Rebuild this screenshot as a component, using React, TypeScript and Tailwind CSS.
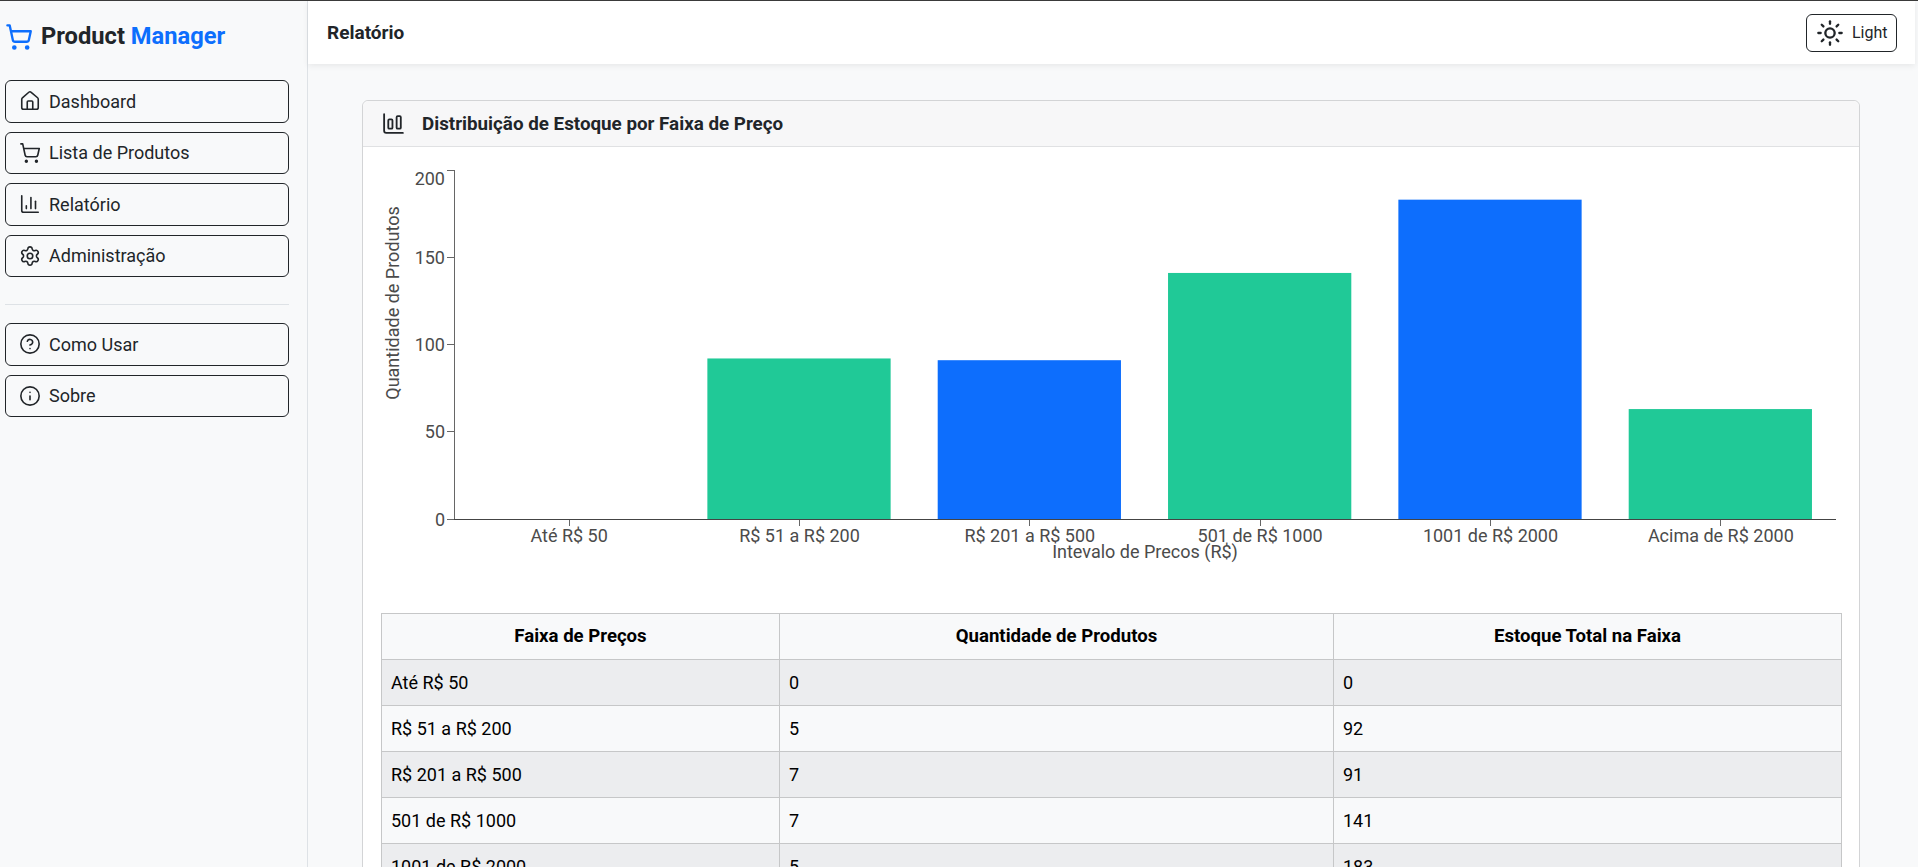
import { ChartColumn, ChartColumnBig, CircleHelp, House, Info, Settings, ShoppingCart, Sun } from "lucide-react";

const FONT = "font-['Roboto','Noto_Sans',sans-serif]";

const NAV_MAIN = [
  { label: "Dashboard", Icon: House },
  { label: "Lista de Produtos", Icon: ShoppingCart },
  { label: "Relatório", Icon: ChartColumn },
  { label: "Administração", Icon: Settings },
];

const NAV_HELP = [
  { label: "Como Usar", Icon: CircleHelp },
  { label: "Sobre", Icon: Info },
];

const ROWS = [
  { range: "Até R$ 50", count: 0, stock: 0 },
  { range: "R$ 51 a R$ 200", count: 5, stock: 92 },
  { range: "R$ 201 a R$ 500", count: 7, stock: 91 },
  { range: "501 de R$ 1000", count: 7, stock: 141 },
  { range: "1001 de R$ 2000", count: 5, stock: 183 },
  { range: "Acima de R$ 2000", count: 3, stock: 63 },
];

// chart area inside the svg
const LEFT = 73;
const RIGHT = 1455;
const TOP = 5;
const BOTTOM = 354;
const BAND = (RIGHT - LEFT) / ROWS.length;
const UNIT = (BOTTOM - TOP) / 200;

function NavButton({ label, Icon }: { label: string; Icon: typeof House }) {
  return (
    <button className="flex h-[42.5px] w-[284px] items-center gap-[8px] rounded-md border border-[#212529] pl-[13px] text-left text-[18px] text-[#212529]">
      <Icon size={22} strokeWidth={1.75} />
      <span>{label}</span>
    </button>
  );
}

function StockChart() {
  return (
    <svg width="1461" height="400" className="block text-[18px]" fill="#4b4b4b">
      {ROWS.map((r, i) => {
        const h = r.stock * UNIT;
        const cx = LEFT + BAND * (i + 0.5);
        return (
          <g key={r.range}>
            {h > 0 && (
              <rect
                x={LEFT + BAND * i + BAND * 0.1}
                y={BOTTOM - h}
                width={BAND * 0.8 - 1}
                height={h}
                fill={i % 2 === 0 ? "#0d6efd" : "#20c997"}
              />
            )}
            <line x1={cx} x2={cx} y1={BOTTOM} y2={BOTTOM + 7} stroke="#666" shapeRendering="crispEdges" />
            <text x={cx} y={BOTTOM + 23} textAnchor="middle">
              {r.range}
            </text>
          </g>
        );
      })}
      <line x1={LEFT} x2={LEFT} y1={TOP} y2={BOTTOM} stroke="#666" shapeRendering="crispEdges" />
      <line x1={LEFT} x2={RIGHT} y1={BOTTOM} y2={BOTTOM} stroke="#444" shapeRendering="crispEdges" />
      {[0, 50, 100, 150, 200].map((v) => {
        const y = BOTTOM - v * UNIT;
        return (
          <g key={v}>
            <line x1={LEFT - 7} x2={LEFT} y1={y} y2={y} stroke="#666" shapeRendering="crispEdges" />
            <text x={LEFT - 9} y={v === 200 ? y + 15 : y + 6.5} textAnchor="end">
              {v}
            </text>
          </g>
        );
      })}
      <text x={18} y={138} textAnchor="middle" transform="rotate(-90 18 138)">
        Quantidade de Produtos
      </text>
      <text x={LEFT + (RIGHT - LEFT) / 2} y={393} textAnchor="middle">
        Intevalo de Precos (R$)
      </text>
    </svg>
  );
}

export default function App() {
  return (
    <div className={`${FONT} flex h-[867px] overflow-hidden border-t border-[#3a3a3a] bg-[#f8f9fa] text-[#212529]`}>
      <aside className="flex w-[308px] shrink-0 flex-col border-r border-[#dee2e6] pl-[5px]">
        <div className="flex h-[79px] items-center gap-[8px] pb-[8px] text-[23.7px] font-bold">
          <ShoppingCart size={28} strokeWidth={2} className="text-[#0d6efd]" />
          <span>
            Product <span className="text-[#0d6efd]">Manager</span>
          </span>
        </div>
        <nav className="flex flex-col gap-[9px]">
          {NAV_MAIN.map((n) => (
            <NavButton key={n.label} {...n} />
          ))}
        </nav>
        <hr className="mb-[18px] mt-[27px] w-[284px] border-[#dee2e6]" />
        <nav className="flex flex-col gap-[9px]">
          {NAV_HELP.map((n) => (
            <NavButton key={n.label} {...n} />
          ))}
        </nav>
      </aside>

      <main className="min-w-0 flex-1 pr-[3px]">
        <header className="flex h-[63px] items-center justify-between bg-white pl-[19px] pr-[18px] shadow-[0_2px_6px_rgba(0,0,0,0.07)]">
          <h1 className="pt-[1px] text-[19px] font-bold">Relatório</h1>
          <button className="flex h-[38px] w-[91px] items-center gap-[8px] rounded-md border border-[#212529] pl-[9px] text-[16px]">
            <Sun size={28} strokeWidth={2} />
            <span>Light</span>
          </button>
        </header>

        <div className="pl-[54px] pr-[55px] pt-[36px]">
          <section className="rounded-md border border-[#d3d4d6] bg-white">
            <div className="flex h-[46px] items-center gap-[16px] rounded-t-md border-b border-[#e0e1e3] bg-[#f7f7f8] pl-[18px] text-[18.8px] font-bold">
              <ChartColumnBig size={25} strokeWidth={1.75} />
              <span className="pt-[1px]">Distribuição de Estoque por Faixa de Preço</span>
            </div>
            <div className="px-[18px] pt-[18px]">
              <StockChart />
              <table className="mt-[48px] w-[1461px] table-fixed border-collapse text-[18px] text-black">
                <thead>
                  <tr className="h-[46px] bg-[#f8f9fa] text-[18.6px]">
                    <th className="w-[398px] border border-[#c6c7c8] font-bold">Faixa de Preços</th>
                    <th className="w-[554px] border border-[#c6c7c8] font-bold">Quantidade de Produtos</th>
                    <th className="border border-[#c6c7c8] font-bold">Estoque Total na Faixa</th>
                  </tr>
                </thead>
                <tbody>
                  {ROWS.map((r, i) => (
                    <tr key={r.range} className={`h-[46px] ${i % 2 === 0 ? "bg-[#ecedef]" : "bg-[#f8f9fa]"}`}>
                      <td className="border border-[#c6c7c8] px-[9px]">{r.range}</td>
                      <td className="border border-[#c6c7c8] px-[9px]">{r.count}</td>
                      <td className="border border-[#c6c7c8] px-[9px]">{r.stock}</td>
                    </tr>
                  ))}
                </tbody>
              </table>
            </div>
          </section>
        </div>
      </main>
    </div>
  );
}
